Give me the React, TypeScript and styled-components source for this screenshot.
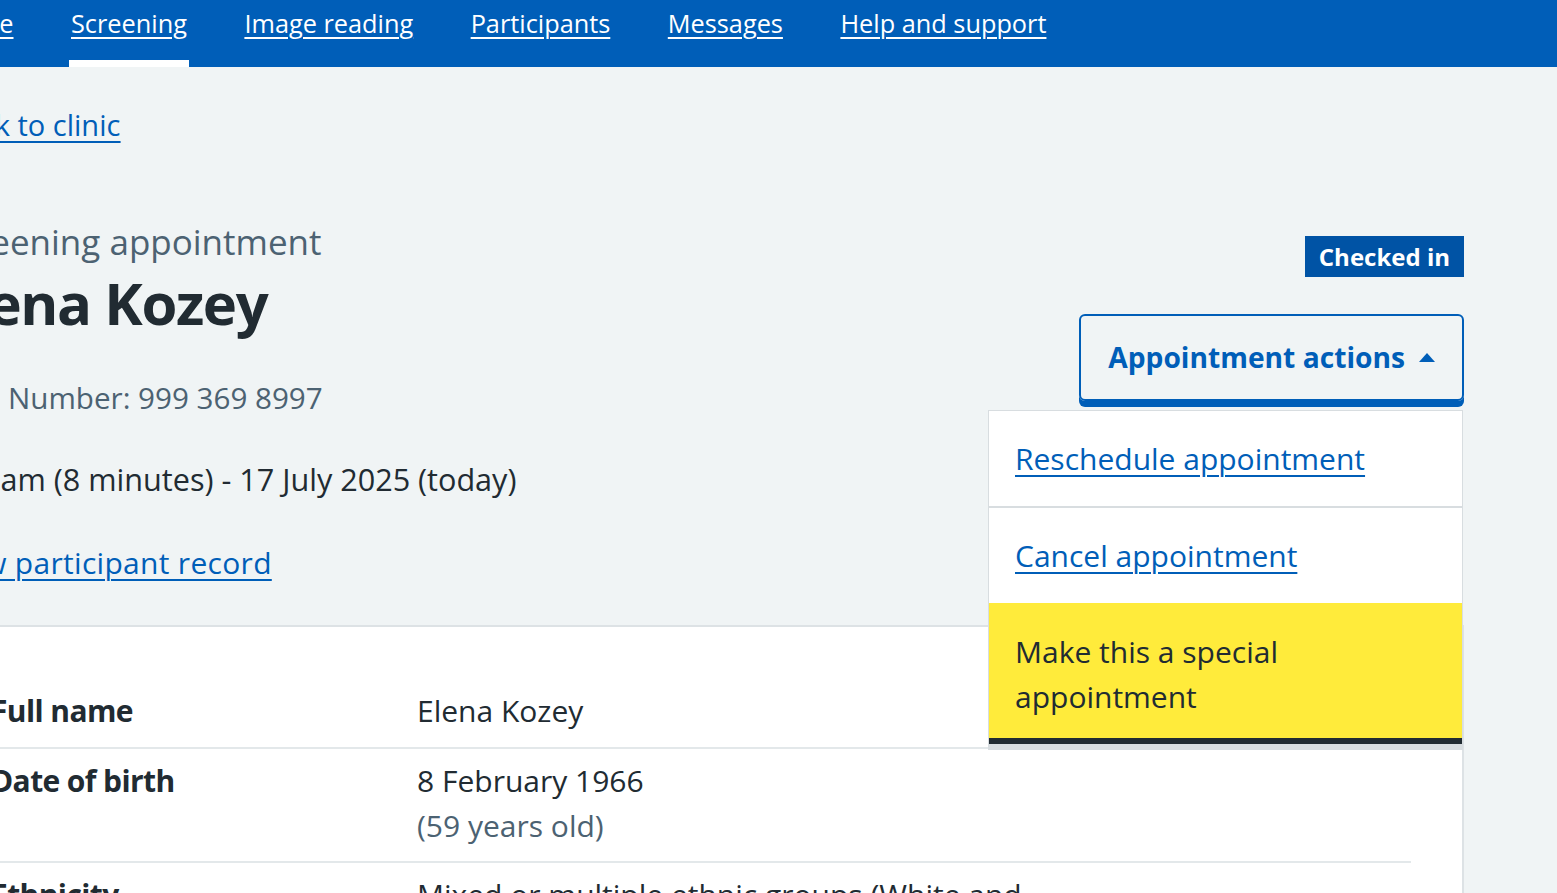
import React from "react";
import styled, { createGlobalStyle, css } from "styled-components";

const GlobalStyle = createGlobalStyle`
  html, body {
    margin: 0;
    padding: 0;
    background: #f0f4f5;
    font-family: "Open Sans", "Noto Sans", Arial, sans-serif;
    color: #212b32;
    overflow: hidden;
  }
  * { box-sizing: border-box; }
`;

const Page = styled.div`
  width: 1557px;
  min-height: 893px;
  overflow: hidden;
  background: #f0f4f5;
`;

const Container = styled.div`
  margin-left: -60px;
  width: 1524px;
`;

const Header = styled.header`
  background: #005eb8;
  height: 67px;
`;

const NavList = styled.ul`
  list-style: none;
  margin: 0 0 0 2px;
  padding: 0;
  display: flex;
  gap: 57.5px;
  height: 67px;
`;

const NavItem = styled.li<{ $active?: boolean }>`
  position: relative;
  height: 67px;
  ${(p) =>
    p.$active &&
    css`
      &::after {
        content: "";
        position: absolute;
        left: -2px;
        right: -2px;
        bottom: 0;
        height: 7px;
        background: #ffffff;
      }
    `}
`;

const NavLink = styled.a`
  display: block;
  padding-top: 4px;
  font-size: 25.3px;
  line-height: 38px;
  color: #ffffff;
  text-decoration: underline;
  text-decoration-thickness: 2px;
  text-underline-offset: 4px;
`;

const TopSection = styled.div`
  display: flex;
  justify-content: space-between;
  align-items: flex-start;
  padding-bottom: 40px;
`;

const LeftColumn = styled.div`
  display: flex;
  flex-direction: column;
  align-items: flex-start;
  padding-top: 35px;
`;

const Link = styled.a`
  color: #005eb8;
  font-size: 30px;
  line-height: 45px;
  text-decoration: underline;
  text-decoration-thickness: 2px;
  text-underline-offset: 5px;
`;

const BackLink = styled(Link)`
  display: flex;
  align-items: center;
  gap: 0;
  font-size: 29px;
`;

const BackText = styled.span`
  text-decoration: underline;
  text-decoration-thickness: 2px;
  text-underline-offset: 5px;
`;

const Caption = styled.span`
  display: block;
  margin-top: 72px;
  font-size: 35px;
  line-height: 45px;
  color: #4c6272;
`;

const Heading = styled.h1`
  margin: 7px 0 0;
  font-size: 58px;
  line-height: 64px;
  font-weight: 700;
  letter-spacing: -1.4px;
  color: #212b32;
`;

const MetaText = styled.p<{ $muted?: boolean; $gap: number }>`
  margin: ${(p) => p.$gap}px 0 0;
  font-size: ${(p) => (p.$muted ? "29.6px" : "30.6px")};
  line-height: 45px;
  color: ${(p) => (p.$muted ? "#4c6272" : "#212b32")};
`;

const RecordLink = styled(Link)`
  display: block;
  margin-top: 38px;
  letter-spacing: 0.3px;
`;

const RightColumn = styled.div`
  display: flex;
  flex-direction: column;
  align-items: flex-end;
  padding-top: 169px;
`;

const Tag = styled.strong`
  display: inline-block;
  background: #0053a5;
  border: 2px solid #0053a5;
  color: #ffffff;
  font-size: 24px;
  font-weight: 700;
  line-height: 25px;
  padding: 6px 12px;
`;

const ActionsMenu = styled.div`
  position: relative;
  margin-top: 37px;
`;

const ActionsButton = styled.button`
  display: flex;
  align-items: center;
  gap: 14px;
  height: 87px;
  padding: 0 27px 0 27px;
  background: transparent;
  border: 2px solid #005eb8;
  border-radius: 6px;
  box-shadow: 0 6px 0 #005eb8;
  color: #005eb8;
  font-family: inherit;
  font-size: 28.2px;
  font-weight: 700;
  line-height: 45px;
  cursor: pointer;
`;

const Dropdown = styled.ul`
  position: absolute;
  top: calc(100% + 9px);
  right: 1px;
  width: 475px;
  margin: 0;
  padding: 0;
  list-style: none;
  background: #ffffff;
  border: 1px solid #d8dde0;
  border-bottom: 6px solid #d8dde0;
  z-index: 2;
`;

const DropdownItem = styled.li<{ $focused?: boolean; $divider?: boolean }>`
  padding: 25px 27px 25px 26px;
  font-size: 30px;
  line-height: 45px;
  border-bottom: ${(p) => (p.$divider ? "2px solid #d8dde0" : "none")};
  ${(p) =>
    p.$focused &&
    css`
      background: #ffeb3b;
      color: #212b32;
      padding-top: 26px;
      padding-bottom: 19px;
      border-bottom: 6px solid #212b32;
    `}
`;

const Card = styled.section`
  background: #ffffff;
  border-top: 2px solid #dde2e5;
  border-right: 2px solid #dde2e5;
  padding: 52px 51px 0 51px;
  min-height: 300px;
`;

const SummaryList = styled.dl`
  margin: 0;
`;

const SummaryRow = styled.div`
  display: grid;
  grid-template-columns: 30% 50% 20%;
  padding: 10px 0 13px;
  border-bottom: 2px solid #e3e8ea;
`;

const Key = styled.dt`
  font-size: 30px;
  line-height: 44.8px;
  font-weight: 700;
  letter-spacing: -0.6px;
  padding-right: 24px;
`;

const Value = styled.dd`
  margin: 0;
  padding-right: 40px;
  font-size: 30px;
  line-height: 44.8px;
`;

const Hint = styled.span`
  display: block;
  color: #4c6272;
`;

const CaretUp = () => (
  <svg width="16" height="9" viewBox="0 0 16 9" aria-hidden="true">
    <path d="M0 9 L8 0 L16 9 Z" fill="#005eb8" />
  </svg>
);

const ChevronLeft = () => (
  <svg width="6" height="12" viewBox="0 0 10 16" aria-hidden="true">
    <path d="M8 2 L2 8 L8 14" stroke="#005eb8" strokeWidth="2.5" fill="none" />
  </svg>
);

const navItems = [
  "Home",
  "Screening",
  "Image reading",
  "Participants",
  "Messages",
  "Help and support",
];

export default function App() {
  return (
    <Page>
      <GlobalStyle />
      <Header>
        <Container>
          <nav>
            <NavList>
              {navItems.map((item) => (
                <NavItem key={item} $active={item === "Screening"}>
                  <NavLink href="#">{item}</NavLink>
                </NavItem>
              ))}
            </NavList>
          </nav>
        </Container>
      </Header>
      <Container>
        <TopSection>
          <LeftColumn>
            <BackLink href="#">
              <ChevronLeft />
              <BackText>Back to clinic</BackText>
            </BackLink>
            <Caption>Screening appointment</Caption>
            <Heading>Elena Kozey</Heading>
            <MetaText $muted $gap={40}>
              NHS Number: 999 369 8997
            </MetaText>
            <MetaText $gap={37}>
              9:40am (8 minutes) - 17 July 2025 (today)
            </MetaText>
            <RecordLink href="#">View participant record</RecordLink>
          </LeftColumn>
          <RightColumn>
            <Tag>Checked in</Tag>
            <ActionsMenu>
              <ActionsButton type="button" aria-expanded="true">
                Appointment actions
                <CaretUp />
              </ActionsButton>
              <Dropdown>
                <DropdownItem $divider>
                  <Link href="#">Reschedule appointment</Link>
                </DropdownItem>
                <DropdownItem>
                  <Link href="#">Cancel appointment</Link>
                </DropdownItem>
                <DropdownItem $focused>Make this a special appointment</DropdownItem>
              </Dropdown>
            </ActionsMenu>
          </RightColumn>
        </TopSection>
        <Card>
          <SummaryList>
            <SummaryRow>
              <Key>Full name</Key>
              <Value>Elena Kozey</Value>
            </SummaryRow>
            <SummaryRow>
              <Key>Date of birth</Key>
              <Value>
                8 February 1966
                <Hint>(59 years old)</Hint>
              </Value>
            </SummaryRow>
            <SummaryRow>
              <Key>Ethnicity</Key>
              <Value>Mixed or multiple ethnic groups (White and Black Caribbean)</Value>
            </SummaryRow>
          </SummaryList>
        </Card>
      </Container>
    </Page>
  );
}
